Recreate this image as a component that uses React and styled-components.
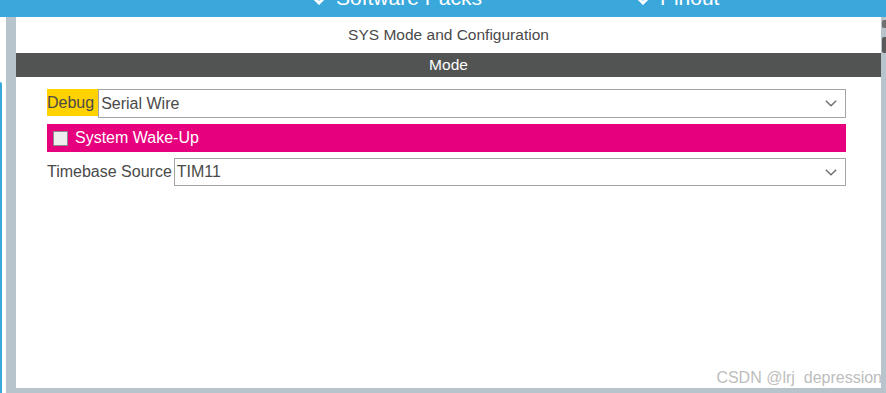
import React from "react";
import styled, { createGlobalStyle } from "styled-components";

const GlobalStyle = createGlobalStyle`
  body {
    margin: 0;
    font-family: "Liberation Sans", Arial, sans-serif;
    background: #ffffff;
  }
`;

const Page = styled.div`
  width: 886px;
  height: 393px;
  display: flex;
  flex-direction: column;
  overflow: hidden;
  background: #ffffff;
`;

const NavBar = styled.div`
  height: 17px;
  flex-shrink: 0;
  background-color: #3aa8db;
  display: flex;
  align-items: flex-start;
  gap: 155px;
  padding-left: 313px;
  overflow: hidden;
`;

const NavTab = styled.div`
  display: flex;
  align-items: flex-start;
  gap: 11px;
  margin-top: -13px;
  color: #ffffff;
  font-size: 21px;
  line-height: 21px;
  white-space: nowrap;

  svg {
    margin-top: 10px;
  }
`;

const Body = styled.div`
  flex: 1;
  display: flex;
  min-height: 0;
`;

const LeftEdge = styled.div`
  width: 6px;
  flex-shrink: 0;
  display: flex;
  flex-direction: column;
  background: #ffffff;
`;

const BlueStrip = styled.div`
  width: 2px;
  flex: 1;
  margin-top: 65px;
  background-color: #3aa8db;
  border-top-right-radius: 2px;
`;

const Frame = styled.div`
  flex: 1;
  display: grid;
  grid-template-columns: 10px 1fr 5px;
  grid-template-rows: 1fr 5px;
  background-color: #b8c4cc;
`;

const Panel = styled.div`
  grid-column: 2;
  grid-row: 1;
  position: relative;
  overflow: hidden;
  background: #ffffff;
  display: flex;
  flex-direction: column;
`;

const Title = styled.div`
  height: 36px;
  line-height: 36px;
  text-align: center;
  font-size: 15.5px;
  color: #4a4a4a;
`;

const ModeBar = styled.div`
  height: 24px;
  line-height: 24px;
  text-align: center;
  font-size: 15.5px;
  color: #ffffff;
  background-color: #525453;
`;

const Form = styled.div`
  display: flex;
  flex-direction: column;
  gap: 6px;
  padding: 12px 35px 0 31px;
`;

const Row = styled.div`
  display: flex;
  align-items: flex-start;
`;

const Label = styled.span`
  font-size: 16px;
  line-height: ${(p) => p.$lh || "28px"};
  padding-right: ${(p) => p.$pad || 0}px;
  color: #4a4a4a;
  white-space: nowrap;
  background-color: ${(p) => (p.$highlight ? "#ffd200" : "transparent")};
`;

const Select = styled.div`
  flex: 1;
  height: ${(p) => p.$h || 28}px;
  box-sizing: border-box;
  border: 1px solid #a3a3a3;
  display: flex;
  align-items: center;
  justify-content: space-between;
  padding: 0 8px 0 2px;
  font-size: 16px;
  color: #4a4a4a;
  background: #ffffff;
`;

const Banner = styled.div`
  height: 28px;
  display: flex;
  align-items: center;
  gap: 7px;
  padding-left: 6px;
  background-color: #e6007e;
  color: #ffffff;
  font-size: 16px;
`;

const CheckBox = styled.span`
  width: 15px;
  height: 15px;
  box-sizing: border-box;
  border: 1px solid #8a8a8a;
  background: #eeeeee;
`;

const Watermark = styled.div`
  position: absolute;
  right: -1px;
  bottom: 2px;
  font-size: 16px;
  line-height: 16px;
  color: #bdbdbd;
  white-space: pre;
`;

const ScrollGutter = styled.div`
  grid-column: 3;
  grid-row: 1;
  display: flex;
  flex-direction: column;
  align-items: flex-end;
  padding-top: 3px;
`;

const ScrollMark = styled.div`
  width: 4px;
  height: ${(p) => p.$h}px;
  margin-top: ${(p) => p.$top}px;
  background-color: ${(p) => p.$color};
  border-radius: 2px 0 0 2px;
`;

const NavChevron = () => (
  <svg width="12" height="8" viewBox="0 0 12 8">
    <polyline
      points="1.5,1.5 6,6 10.5,1.5"
      fill="none"
      stroke="#ffffff"
      strokeWidth="3"
    />
  </svg>
);

const SelectChevron = () => (
  <svg width="12" height="7" viewBox="0 0 12 7">
    <polyline
      points="0.8,0.8 6,5.8 11.2,0.8"
      fill="none"
      stroke="#6e6e6e"
      strokeWidth="1.4"
    />
  </svg>
);

const App = () => (
  <>
    <GlobalStyle />
    <Page>
      <NavBar>
        <NavTab>
          <NavChevron />
          Software Packs
        </NavTab>
        <NavTab>
          <NavChevron />
          Pinout
        </NavTab>
      </NavBar>
      <Body>
        <LeftEdge>
          <BlueStrip />
        </LeftEdge>
        <Frame>
          <Panel>
            <Title>SYS Mode and Configuration</Title>
            <ModeBar>Mode</ModeBar>
            <Form>
              <Row>
                <Label $highlight $lh="27px" $pad={4}>
                  Debug
                </Label>
                <Select $h={29}>
                  Serial Wire
                  <SelectChevron />
                </Select>
              </Row>
              <Banner>
                <CheckBox />
                System Wake-Up
              </Banner>
              <Row>
                <Label $pad={2}>Timebase Source</Label>
                <Select>
                  TIM11
                  <SelectChevron />
                </Select>
              </Row>
            </Form>
            <Watermark>CSDN @lrj  depression</Watermark>
          </Panel>
          <ScrollGutter>
            <ScrollMark $h={8} $top={0} $color="#6f6f6f" />
            <ScrollMark $h={16} $top={9} $color="#5a5a5a" />
          </ScrollGutter>
        </Frame>
      </Body>
    </Page>
  </>
);

export default App;
